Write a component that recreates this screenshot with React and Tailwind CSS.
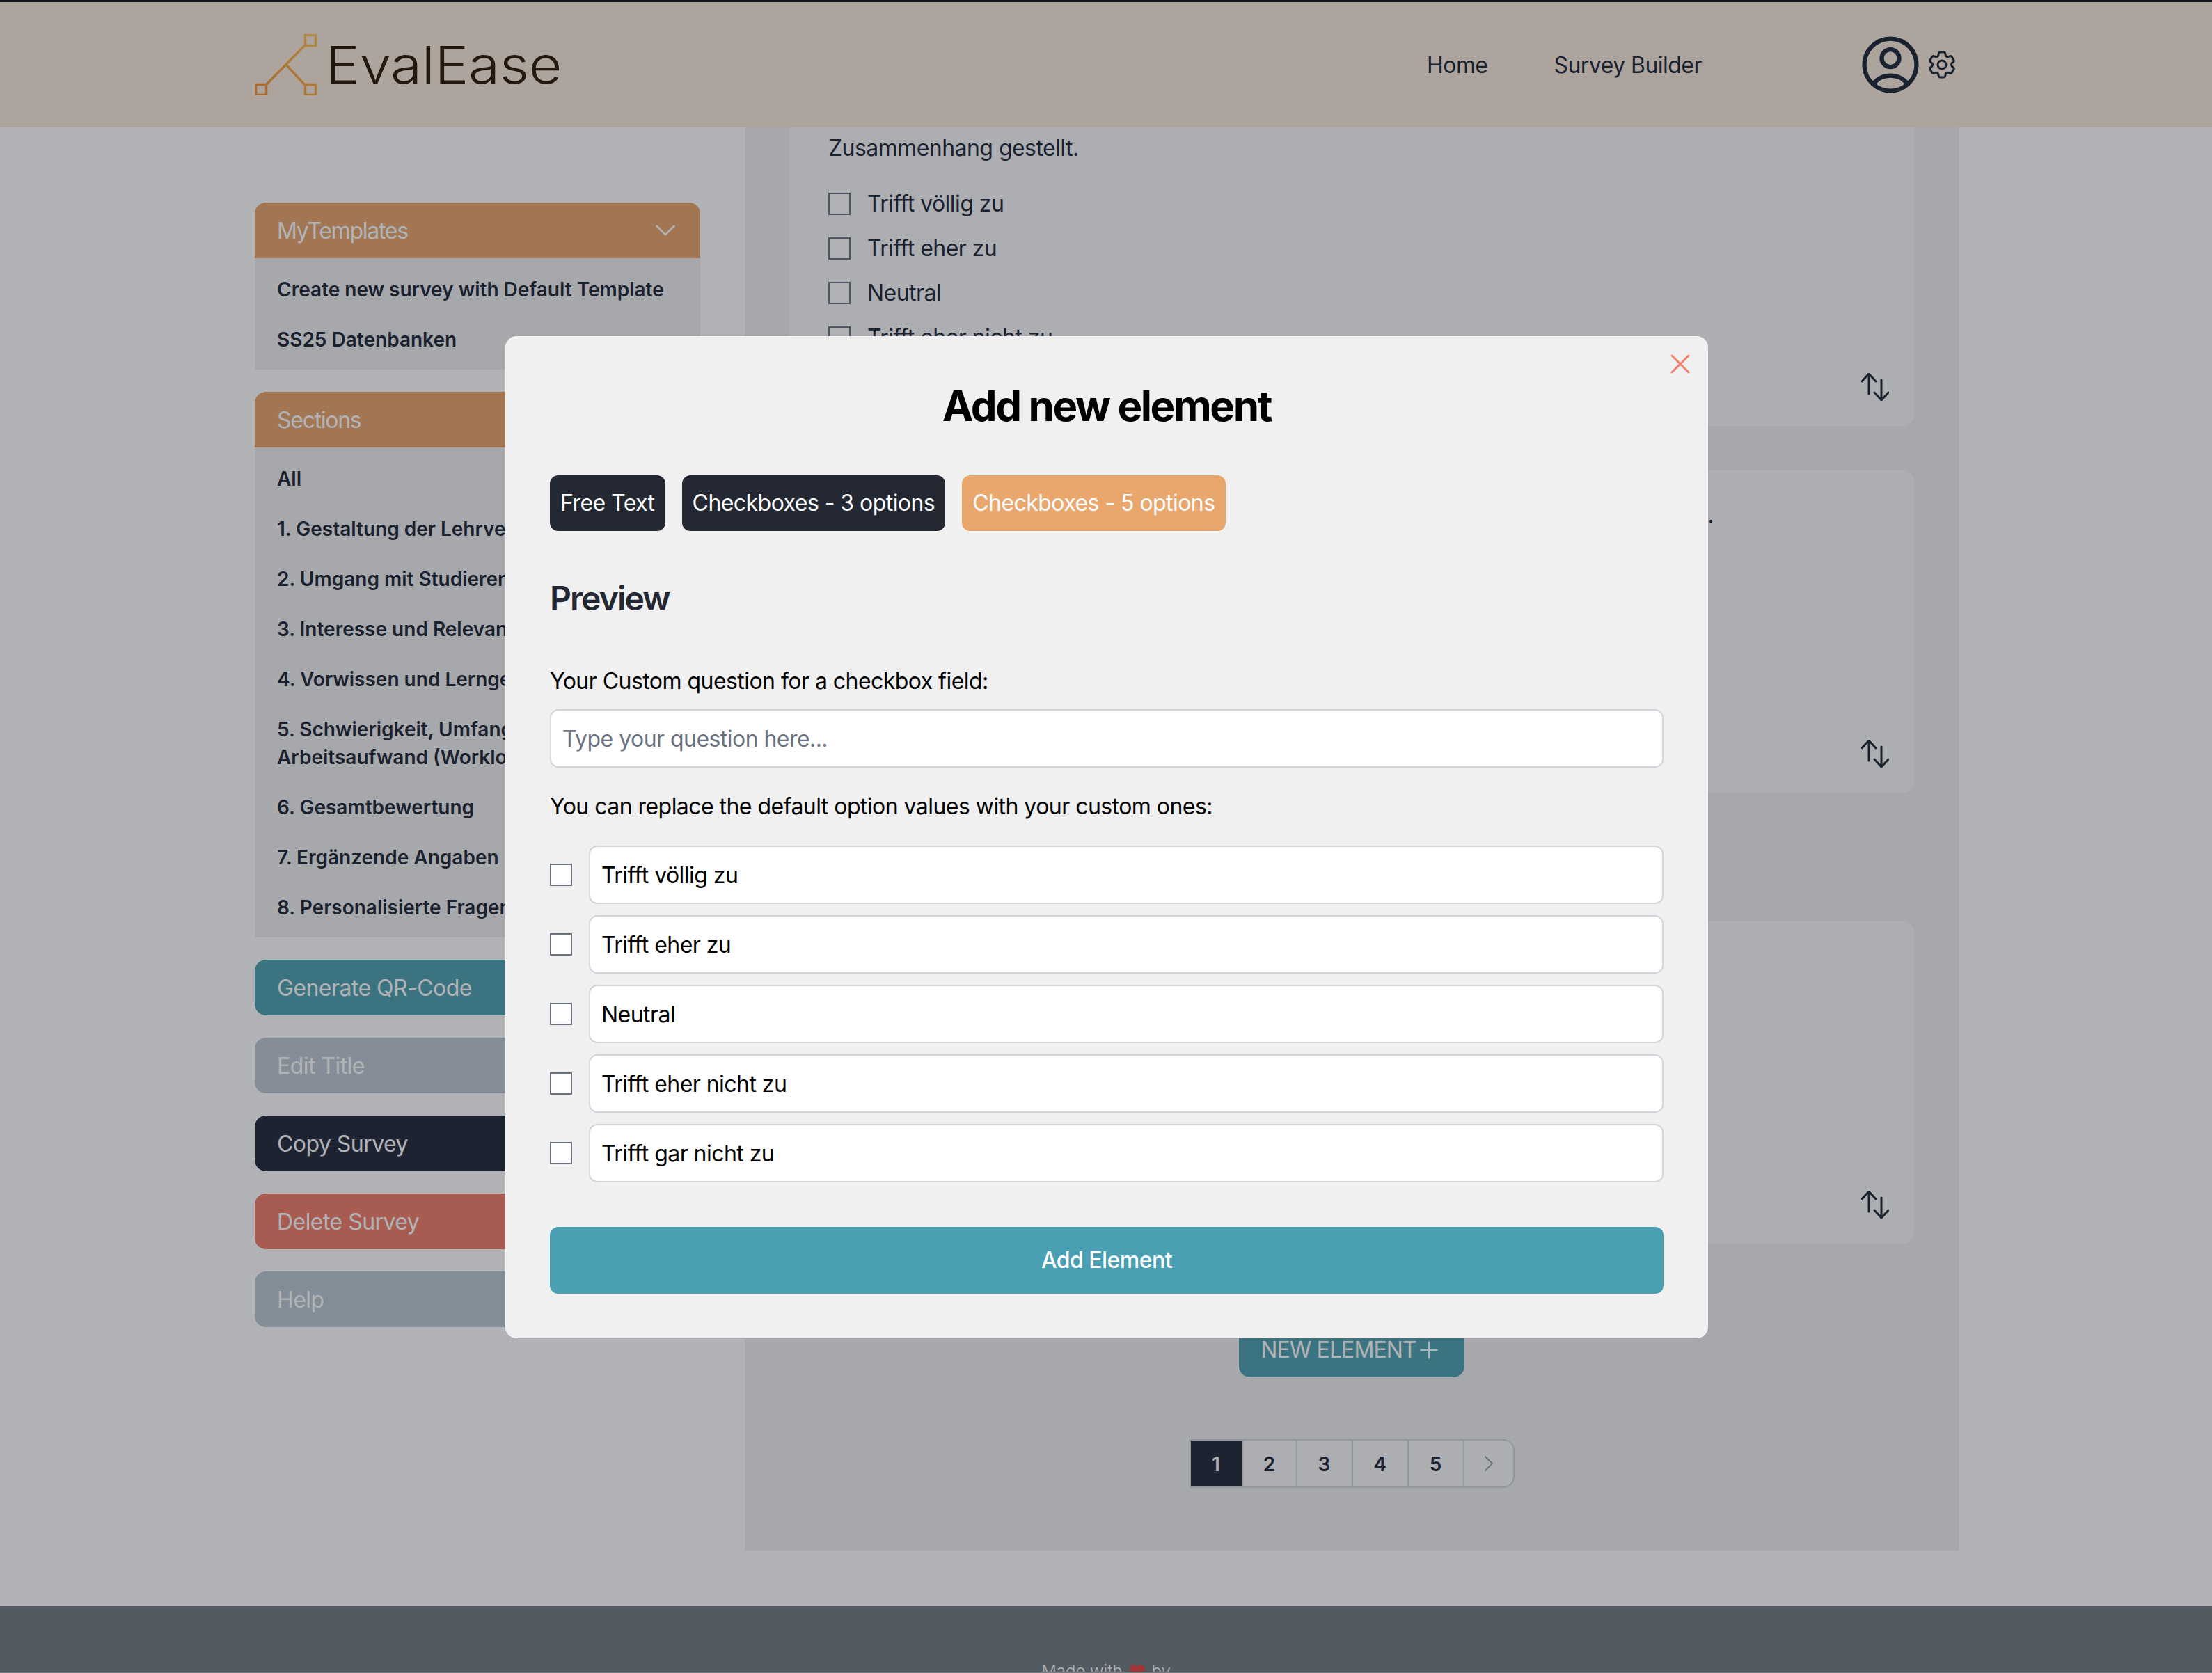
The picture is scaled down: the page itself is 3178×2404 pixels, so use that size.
import React from "react";
import { HiOutlineUserCircle, HiOutlineCog6Tooth, HiOutlineChevronDown, HiOutlineChevronRight, HiOutlineXMark } from "react-icons/hi2";
import { Plus } from "lucide-react";

const opts = ["Trifft völlig zu", "Trifft eher zu", "Neutral", "Trifft eher nicht zu", "Trifft gar nicht zu"];
const sections = [
  "All",
  "1. Gestaltung der Lehrveranstaltung",
  "2. Umgang mit Studierenden",
  "3. Interesse und Relevanz",
  "4. Vorwissen und Lerngewinn",
  "5. Schwierigkeit, Umfang und Arbeitsaufwand (Workload)",
  "6. Gesamtbewertung",
  "7. Ergänzende Angaben",
  "8. Personalisierte Fragen",
];

function Logo() {
  return (
    <svg width="90" height="88" viewBox="0 0 90 88" fill="none" className="shrink-0">
      <defs>
        <linearGradient id="lg" x1="0" y1="88" x2="90" y2="0" gradientUnits="userSpaceOnUse">
          <stop offset="0" stopColor="#F58F3A" />
          <stop offset="1" stopColor="#FAC552" />
        </linearGradient>
      </defs>
      <g stroke="url(#lg)" strokeWidth="3.5">
        <rect x="72.5" y="1.5" width="15" height="15" />
        <rect x="1.5" y="72.5" width="15" height="15" />
        <rect x="72.5" y="72.5" width="15" height="15" />
        <path d="M16 73L72 16M45 44L72 73" />
      </g>
    </svg>
  );
}

function SwapIcon() {
  return (
    <svg width="40" height="40" viewBox="0 0 40 40" fill="none" stroke="#1f2937" strokeWidth="3" strokeLinecap="round" strokeLinejoin="round">
      <path d="M11 1V30M1 12L11 1L21 12" />
      <path d="M29 39V10M19 28L29 39L39 28" />
    </svg>
  );
}

function Question({ text, right }) {
  return (
    <div className="relative h-[463px] rounded-2xl bg-gray-50 pl-14 pt-10 text-[32px] leading-[48px] text-gray-800">
      {right ? <div className="flex w-[1272px] justify-end whitespace-nowrap">{text}</div> : <div>{text}</div>}
      <Options />
      <div className="absolute bottom-9 right-9"><SwapIcon /></div>
    </div>
  );
}

function Options() {
  return (
    <div className="mt-8 flex flex-col gap-4">
      {opts.map((o) => (
        <label key={o} className="flex h-12 items-center gap-6">
          <input type="checkbox" className="h-8 w-8 appearance-none border-2 border-gray-500 bg-white" />
          <span>{o}</span>
        </label>
      ))}
    </div>
  );
}

function SideList({ title, items, chevron }) {
  return (
    <div>
      <div className="flex h-20 items-center justify-between rounded-t-2xl bg-[#E9A66D] pl-8 pr-[30px] text-[32px] tracking-[-0.04em] text-white">
        <span className="pt-[2px]">{title}</span>
        {chevron && <HiOutlineChevronDown size={40} />}
      </div>
      <div className="bg-[#F0F0F0] py-2">
        {items.map((i) => (
          <div key={i} className="px-8 pb-[15px] pt-[17px] text-[28px] font-semibold leading-10 tracking-normal text-gray-800">{i}</div>
        ))}
      </div>
    </div>
  );
}

function SideButton({ cls, children }) {
  return <button className={`h-20 rounded-2xl pl-8 pt-[2px] text-left text-[32px] ${cls}`}>{children}</button>;
}

export default function App() {
  return (
    <div className="relative flex h-[2404px] w-[3178px] flex-col overflow-hidden bg-white font-['Inter',sans-serif] tracking-[-0.034em]">
      <div className="h-[3px] shrink-0 bg-[#14141f]" />
      <header className="flex h-[180px] shrink-0 items-center bg-[#F9EBDD] pl-[366px] pr-[364px] text-gray-800">
        <div className="flex w-[439px] items-center gap-[12px]">
          <Logo />
          <span className="origin-left scale-x-[1.11] text-[74px] font-light leading-none tracking-[-0.005em] text-[#2E1C08]">EvalEase</span>
        </div>
        <nav className="ml-[1245px] flex gap-[95px] pt-[2px] text-[32px]">
          <a>Home</a>
          <a>Survey Builder</a>
        </nav>
        <div className="ml-auto flex items-center">
          <HiOutlineUserCircle size={100} />
          <HiOutlineCog6Tooth size={48} />
        </div>
      </header>

      <div className="flex h-[2125px] shrink-0 gap-16 overflow-hidden pl-[366px]">
        <aside className="flex w-[640px] shrink-0 flex-col pt-[108px]">
          <SideList title="MyTemplates" chevron items={["Create new survey with Default Template", "SS25 Datenbanken"]} />
          <div className="mt-8"><SideList title="Sections" chevron items={sections} /></div>
          <div className="mt-8 flex flex-col gap-8">
            <SideButton cls="bg-[#4FA3B0] text-white">Generate QR-Code</SideButton>
            <SideButton cls="bg-[#BECAD4] text-white">Edit Title</SideButton>
            <SideButton cls="bg-[#242B3D] text-white">Copy Survey</SideButton>
            <SideButton cls="bg-[#F27F6A] text-white">Delete Survey</SideButton>
            <SideButton cls="bg-[#BAC8D2] text-white">Help</SideButton>
          </div>
        </aside>

        <main className="flex h-[2045px] w-[1744px] shrink-0 flex-col bg-[#F0F0F0] px-16">
          <div className="relative h-[429px] shrink-0 rounded-b-2xl bg-gray-50 pl-14 pt-[6px] text-[32px] leading-[48px] text-gray-800">
            <div>Zusammenhang gestellt.</div>
            <Options />
            <div className="absolute bottom-9 right-9"><SwapIcon /></div>
          </div>
          <div className="mt-16 shrink-0">
            <Question right text="Die Lernziele der Lehrveranstaltung wurden zu Beginn klar und deutlich besprochen." />
          </div>
          <div className="mt-[185px] shrink-0">
            <Question text="Die Lehrveranstaltung ist gut strukturiert." />
          </div>
          <button className="mx-auto mt-[112px] flex h-20 w-[324px] shrink-0 items-center justify-center rounded-2xl bg-[#4FA3B0] pt-[2px] text-[32px] tracking-[-0.028em] text-white">
            NEW ELEMENT
            <Plus size={40} strokeWidth={1.2} className="-ml-[2px]" />
          </button>
          <div className="mx-auto mt-[89px] flex h-[70px] shrink-0 overflow-hidden rounded-r-2xl border-2 border-gray-300 bg-gray-50 pt-0 text-[28px] font-semibold tracking-normal text-gray-800">
            <div className="flex w-[73px] items-center justify-center bg-[#242B3D] pt-[2px] text-white">1</div>
            <div className="flex w-[80px] items-center justify-center border-x-2 border-gray-300 pt-[2px]">2</div>
            <div className="flex w-[80px] items-center justify-center border-r-2 border-gray-300 pt-[2px]">3</div>
            <div className="flex w-[80px] items-center justify-center border-r-2 border-gray-300 pt-[2px]">4</div>
            <div className="flex w-[80px] items-center justify-center border-r-2 border-gray-300 pt-[2px]">5</div>
            <div className="flex w-[70px] items-center justify-center text-gray-400"><HiOutlineChevronRight size={32} /></div>
          </div>
        </main>
      </div>

      <footer className="h-[94px] shrink-0 overflow-hidden bg-[#737C82] pt-[78px] text-center text-[24px] font-light leading-8 tracking-normal text-white">
        <div className="flex items-center justify-center gap-[10px]">
          <span>Made with</span>
          <svg width="22" height="20" viewBox="0 0 22 20" fill="#E8443F"><path d="M11 20C5 15 0 11 0 6a5.8 5.8 0 0 1 11-2.5A5.8 5.8 0 0 1 22 6c0 5-5 9-11 14Z" /></svg>
          <span>by</span>
        </div>
      </footer>
      <div className="h-[2px] shrink-0 bg-[#A9ADB3]" />

      <div className="absolute inset-0 flex items-center justify-center bg-[#13161F]/33 pl-[2px] pt-[2px]">
        <div className="relative h-[1440px] w-[1728px] rounded-2xl bg-[#F0F0F0] p-16 text-[32px] text-black">
          <button className="absolute right-4 top-4 text-[#F27F6A]"><HiOutlineXMark size={48} /></button>
          <h2 className="text-center text-[60px] font-bold leading-[72px] tracking-[-0.04em]">Add new element</h2>
          <div className="mt-16 flex gap-6 text-white">
            <button className="h-20 rounded-xl bg-[#232832] px-[15px]">Free Text</button>
            <button className="h-20 rounded-xl bg-[#232832] px-[15px]">Checkboxes - 3 options</button>
            <button className="h-20 rounded-xl bg-[#E9A66D] px-[15px]">Checkboxes - 5 options</button>
          </div>
          <h3 className="mt-[65px] text-[48px] font-semibold leading-[64px] tracking-[-0.04em] text-[#232832]">Preview</h3>
          <p className="mt-[63px] leading-[48px]">Your Custom question for a checkbox field:</p>
          <input placeholder="Type your question here..." className="mt-4 h-[84px] w-full rounded-xl border-2 border-gray-300 bg-white px-4 placeholder:text-gray-500" />
          <p className="mt-8 leading-[48px]">You can replace the default option values with your custom ones:</p>
          <div className="mt-8 flex flex-col gap-4">
            {opts.map((o) => (
              <div key={o} className="flex items-center gap-6">
                <input type="checkbox" className="h-8 w-8 shrink-0 appearance-none border-2 border-gray-500 bg-white" />
                <input defaultValue={o} className="h-[84px] w-full rounded-xl border-2 border-gray-300 bg-white px-4" />
              </div>
            ))}
          </div>
          <button className="mt-16 h-24 w-full rounded-xl bg-[#4A9FB2] font-medium text-white">Add Element</button>
        </div>
      </div>
    </div>
  );
}
